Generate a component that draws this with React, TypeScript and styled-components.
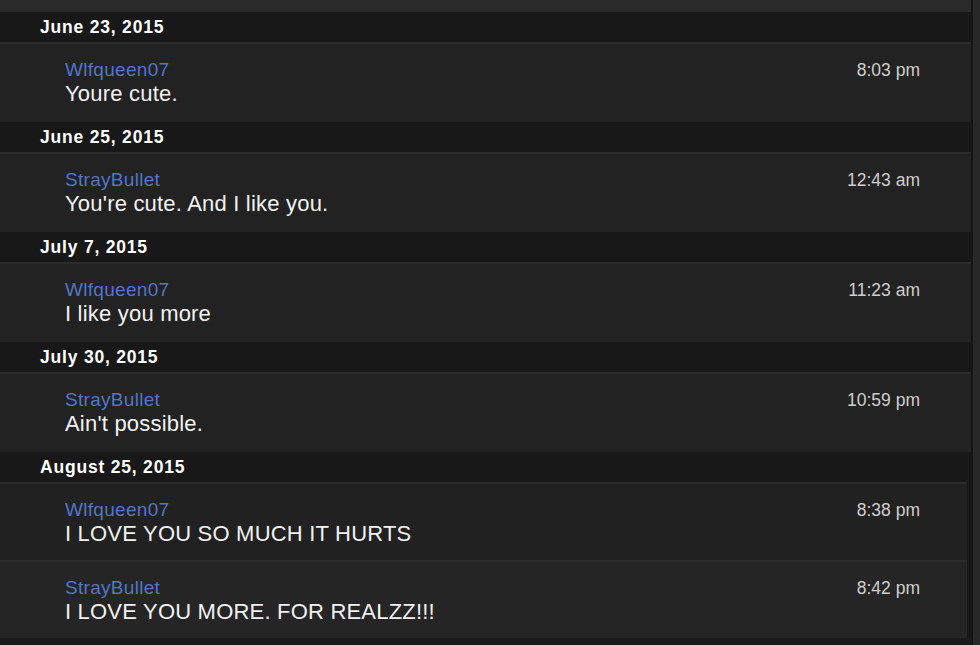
import React from "react";
import styled, { createGlobalStyle } from "styled-components";

const Global = createGlobalStyle`
  html, body { margin: 0; padding: 0; background: #282828; }
  body { font-family: "Liberation Sans", Arial, Helvetica, sans-serif; }
`;

const Page = styled.div`
  width: 980px;
  height: 645px;
  overflow: hidden;
  display: flex;
  background: #282828;
`;

const Main = styled.div`
  width: 971px;
  flex: none;
  display: flex;
  flex-direction: column;
  background: #1a1a1a;
  border-right: 2px solid #141414;
`;

const TopStrip = styled.div`
  height: 12px;
  background: #2a2a2a;
  flex: none;
`;

const DateHeader = styled.div`
  height: 30px;
  flex: none;
  background: #181818;
  padding-left: 40px;
  display: flex;
  align-items: center;
  color: #ffffff;
  font-weight: 700;
  font-size: 17.5px;
  letter-spacing: 0.8px;
`;

const List = styled.div<{ $scroll?: boolean }>`
  display: flex;
  flex-direction: column;
  border-right: ${(p) => (p.$scroll ? "4px solid #181818" : "none")};
`;

const Row = styled.div<{ $tall?: boolean; $tone?: string }>`
  box-sizing: border-box;
  height: ${(p) => (p.$tall ? 80 : 78)}px;
  background: ${(p) => p.$tone || "#222222"};
  border-top: 2px solid #2b2b2b;
  padding: 15px ${(p) => (p.$tall ? 51 : 47)}px 0 65px;
  display: flex;
  justify-content: space-between;
  align-items: flex-start;
`;

const Body = styled.div`
  display: flex;
  flex-direction: column;
`;

const User = styled.div`
  color: #5275c8;
  font-size: 19px;
  line-height: 22px;
  letter-spacing: 0.3px;
`;

const Text = styled.div`
  color: #f2f2f2;
  font-size: 22px;
  line-height: 25px;
  letter-spacing: 0.2px;
`;

const Time = styled.div`
  color: #cfcfcf;
  font-size: 17.5px;
  line-height: 22px;
`;

const Bottom = styled.div`
  flex: 1;
  background: #1a1a1a;
`;

type Msg = { user: string; text: string; time: string };
const groups: { date: string; msgs: Msg[] }[] = [
  { date: "June 23, 2015", msgs: [{ user: "Wlfqueen07", text: "Youre cute.", time: "8:03 pm" }] },
  { date: "June 25, 2015", msgs: [{ user: "StrayBullet", text: "You're cute. And I like you.", time: "12:43 am" }] },
  { date: "July 7, 2015", msgs: [{ user: "Wlfqueen07", text: "I like you more", time: "11:23 am" }] },
  { date: "July 30, 2015", msgs: [{ user: "StrayBullet", text: "Ain't possible.", time: "10:59 pm" }] },
  {
    date: "August 25, 2015",
    msgs: [
      { user: "Wlfqueen07", text: "I LOVE YOU SO MUCH IT HURTS", time: "8:38 pm" },
      { user: "StrayBullet", text: "I LOVE YOU MORE. FOR REALZZ!!!", time: "8:42 pm" },
    ],
  },
];

export default function App() {
  return (
    <>
      <Global />
      <Page>
        <Main>
          <TopStrip />
          {groups.map((g) => {
            const multi = g.msgs.length > 1;
            return (
              <React.Fragment key={g.date}>
                <DateHeader>{g.date}</DateHeader>
                <List $scroll={multi}>
                  {g.msgs.map((m, i) => (
                    <Row
                      key={i}
                      $tall={!multi}
                      $tone={multi ? (i === 0 ? "#212121" : "#252525") : "#222222"}
                    >
                      <Body>
                        <User>{m.user}</User>
                        <Text>{m.text}</Text>
                      </Body>
                      <Time>{m.time}</Time>
                    </Row>
                  ))}
                </List>
              </React.Fragment>
            );
          })}
          <Bottom />
        </Main>
      </Page>
    </>
  );
}
